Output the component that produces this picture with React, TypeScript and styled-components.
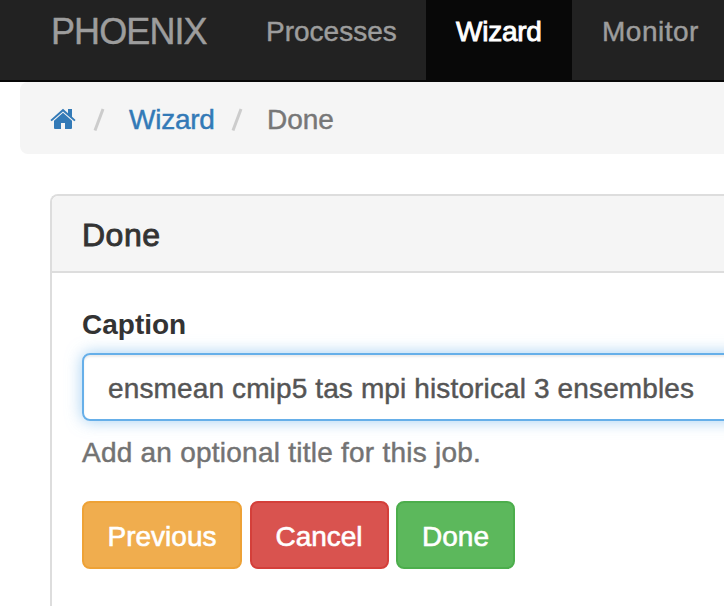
import React from "react";
import styled, { createGlobalStyle } from "styled-components";

const Global = createGlobalStyle`
  * { box-sizing: border-box; }
  body { margin: 0; background: #fff; overflow: hidden; font: 28px/40px "Liberation Sans", Arial, sans-serif; color: #333; }
`;
const Page = styled.div`width: 724px; height: 606px; overflow: hidden; -webkit-text-stroke: 0.45px currentColor;`;
const Navbar = styled.nav`height: 82px; display: flex; background: #222; border-bottom: 2px solid #080808; padding-left: 51px; white-space: nowrap;`;
const Label = styled.span<{ $w?: number; $size?: number; $bold?: boolean; $track?: number; $stroke?: number }>`
  display: inline-block; width: ${p => (p.$w ? `${p.$w}px` : "auto")}; font-size: ${p => p.$size ?? 28}px; white-space: nowrap;
  font-weight: ${p => (p.$bold ? 700 : 400)}; letter-spacing: ${p => p.$track ?? 0}px;
  -webkit-text-stroke-width: ${p => p.$stroke ?? 0.45}px;
`;
const Brand = styled.div`flex: none; width: 185px; padding-top: 12px; color: #9d9d9d;`;
const NavItem = styled.a<{ $active?: boolean }>`
  flex: none; height: 80px; padding: 12px 30px 0; color: ${p => (p.$active ? "#fff" : "#9d9d9d")};
  background: ${p => (p.$active ? "#080808" : "transparent")};
`;
const Breadcrumb = styled.div`
  margin-left: 20px; height: 72px; padding: 3px 30px 0; display: flex; align-items: center;
  background: #f5f5f5; border-radius: 8px 0 0 8px; color: #777;
`;
const HomeIcon = styled.svg`flex: none; margin-bottom: 1px;`;
const Crumb = styled.a`color: #337ab7;`;
const Slash = styled.span`width: 53px; display: flex; align-items: center; padding-left: 17px;`;
const Panel = styled.section`margin: 40px 0 0 50px; height: 460px; border: 2px solid #ddd; border-right: 0; border-radius: 8px 0 0 0;`;
const Heading = styled.header`height: 77px; padding: 19px 30px 0; border-bottom: 2px solid #ddd; background: #f5f5f5; border-radius: 6px 0 0 0;`;
const Form = styled.div`padding: 32px 0 0 30px;`;
const Field = styled.div`
  margin-top: 8px; height: 68px; width: 800px; padding: 14px 24px 10px; border: 2px solid #66afe9; border-radius: 8px; color: #555;
  box-shadow: inset 0 2px 2px rgba(0,0,0,.075), 0 0 16px rgba(102,175,233,.6);
`;
const Help = styled.p`margin: 12px 0 28px; color: #737373;`;
const Actions = styled.div`display: flex; gap: 7.5px;`;
const Button = styled.button<{ $bg: string; $edge: string; $w: number }>`
  width: ${p => p.$w}px; height: 68px; padding: 3px 0 0; font: inherit; color: #fff; -webkit-text-stroke: 0.6px #fff;
  background: ${p => p.$bg}; border: 2px solid ${p => p.$edge}; border-radius: 8px;
`;

const Divider = () => (
  <Slash>
    <svg width="13" height="24" viewBox="0 0 13 24"><path d="M2 22.5 10 1" stroke="#ccc" strokeWidth="3" /></svg>
  </Slash>
);

export default function App() {
  return (
    <Page>
      <Global />
      <Navbar>
        <Brand><Label $w={156} $size={36} $track={-0.9}>PHOENIX</Label></Brand>
        <NavItem><Label $w={130}>Processes</Label></NavItem>
        <NavItem $active><Label $w={86} $track={-0.25} $stroke={0.9}>Wizard</Label></NavItem>
        <NavItem><Label $w={97} $track={0.5}>Monitor</Label></NavItem>
      </Navbar>
      <Breadcrumb>
        <HomeIcon width="26" height="22" viewBox="0 0 26 22" fill="#337ab7">
          <path d="M13 .8 18 5.2V1H22V8.8L25.6 12 24.3 13.3 13 3.4 1.7 13.3.4 12Z" />
          <path d="M13 4.8 22 12.7V20Q22 21 21 21H15V15H11V21H5Q4 21 4 20V12.7Z" />
        </HomeIcon>
        <Divider /><Crumb><Label $w={85} $track={-0.25}>Wizard</Label></Crumb><Divider />Done
      </Breadcrumb>
      <Panel>
        <Heading><Label $size={32} $track={0.5} $stroke={0.9}>Done</Label></Heading>
        <Form>
          <Label $w={105} $bold $stroke={0}>Caption</Label>
          <Field><Label $track={0.13}>ensmean cmip5 tas mpi historical 3 ensembles</Label></Field>
          <Help><Label $track={0.24}>Add an optional title for this job.</Label></Help>
          <Actions>
            <Button $bg="#f0ad4e" $edge="#eea236" $w={160}>Previous</Button>
            <Button $bg="#d9534f" $edge="#d43f3a" $w={139}>Cancel</Button>
            <Button $bg="#5cb85c" $edge="#4cae4c" $w={119}>Done</Button>
          </Actions>
        </Form>
      </Panel>
    </Page>
  );
}
